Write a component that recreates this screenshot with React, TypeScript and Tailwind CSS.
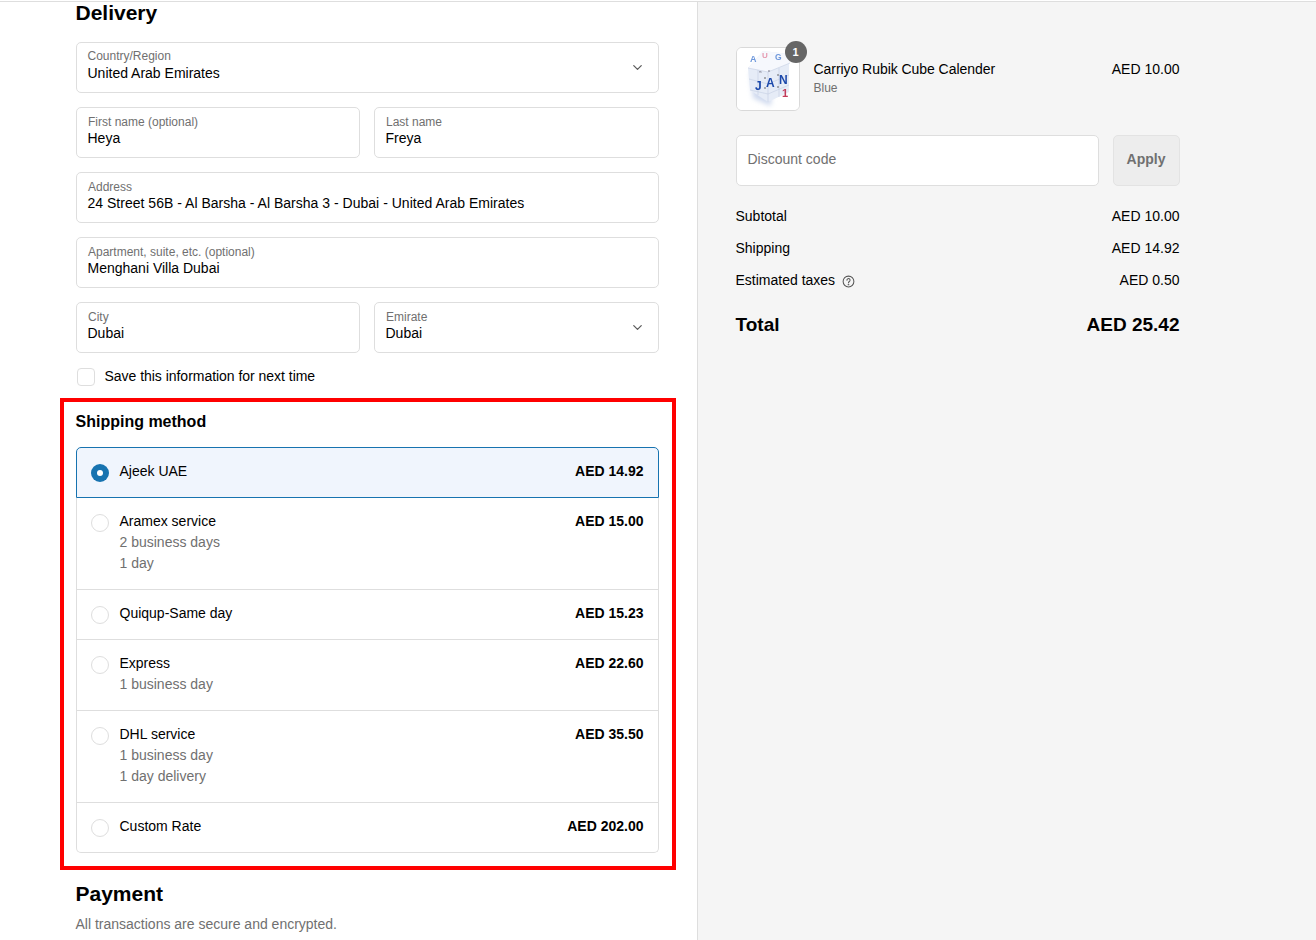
import React from "react";
import { ChevronDown } from "lucide-react";

function Field({ label, value, chevron, className = "", first, valueClass = "" }: { label: string; value: string; chevron?: boolean; className?: string; first?: boolean; valueClass?: string }) {
  return (
    <div className={`relative h-[51px] rounded-[5px] border border-[#dedede] bg-white pl-[11px] ${first ? "pt-[6px]" : "pt-[7px]"} ${className}`}>
      <div className={`${first ? "" : "pl-[0.5px]"} text-[12px] leading-[14px] text-[#707070]`}>{label}</div>
      <div className={`${first ? "mt-[1px]" : ""} text-[14px] leading-[18px] text-[#000] ${valueClass}`}>{value}</div>
      {chevron && <ChevronDown className="absolute right-[13px] top-[17px] text-[#5c5c5c]" size={15} strokeWidth={2} />}
    </div>
  );
}

const options = [
  { name: "Ajeek UAE", price: "AED 14.92", sub: [], h: "h-[51px]", selected: true },
  { name: "Aramex service", price: "AED 15.00", sub: ["2 business days", "1 day"], h: "h-[92px]" },
  { name: "Quiqup-Same day", price: "AED 15.23", sub: [], h: "h-[50px]" },
  { name: "Express", price: "AED 22.60", sub: ["1 business day"], h: "h-[71px]" },
  { name: "DHL service", price: "AED 35.50", sub: ["1 business day", "1 day delivery"], h: "h-[92px]" },
  { name: "Custom Rate", price: "AED 202.00", sub: [], h: "h-[50px]" },
];

function Option({ o, i }: { o: (typeof options)[number]; i: number }) {
  const last = i === options.length - 1;
  return (
    <div
      className={`${o.h} flex items-start pl-[14px] pr-[14px] pt-[13px] ${
        o.selected
          ? "rounded-t-[5px] border border-[#1773b0] bg-[#f0f5fd]"
          : `border-x border-b border-[#dedede] bg-white ${last ? "rounded-b-[5px]" : ""}`
      }`}
    >
      <div
        className={`mt-[3px] flex h-[18px] w-[18px] shrink-0 items-center justify-center rounded-full ${
          o.selected ? "bg-[#1773b0]" : "border border-[#dedede] bg-white"
        }`}
      >
        {o.selected && <div className="h-[6px] w-[6px] rounded-full bg-white" />}
      </div>
      <div className="ml-[11px] flex-1 text-[14px] leading-[21px]">
        <div className="text-[#000]">{o.name}</div>
        {o.sub.map((s) => (
          <div key={s} className="text-[#707070]">{s}</div>
        ))}
      </div>
      <div className="text-[14px] font-bold leading-[21px] text-[#000]">{o.price}</div>
    </div>
  );
}

function Cube() {
  const f = "Liberation Sans";
  return (
    <svg viewBox="0 0 62 62" className="h-full w-full rounded-[5px]">
      <defs>
        <filter id="soft" x="-20%" y="-20%" width="140%" height="140%">
          <feGaussianBlur stdDeviation="0.35" />
        </filter>
        <filter id="shadow" x="-30%" y="-30%" width="160%" height="160%">
          <feGaussianBlur stdDeviation="2.5" />
        </filter>
      </defs>
      <rect width="62" height="62" fill="#fff" />
      <path d="M13 24 L36 28 L34 58 L16 50 Z" fill="#cfd9ee" filter="url(#shadow)" />
      <g filter="url(#soft)">
        <path d="M11 20 L26 3 L52 6 L52 44 L31 54 L13 42 Z" fill="#e6ecf7" />
        <path d="M11 20 L26 3 L52 6 L53 15 L31 24 Z" fill="#f6f8fd" />
        <path d="M11 20 L31 24 L53 15 M31 24 L31 54 M12 31 L31 36 L52 27 M13 42 L31 46 L52 37 M21 22 L21 47 M42 20 L42 49" stroke="#c5cfe2" strokeWidth="0.6" fill="none" />
        <text x="13" y="14" fontSize="9" fill="#6d97db" fontWeight="700" fontFamily={f}>A</text>
        <text x="25" y="10" fontSize="8" fill="#e69ab0" fontWeight="700" fontFamily={f}>U</text>
        <text x="38" y="12" fontSize="8.5" fill="#6d97db" fontWeight="700" fontFamily={f}>G</text>
        <text x="18" y="42" fontSize="12" fill="#1c48ab" fontWeight="700" fontFamily={f}>J</text>
        <text x="29" y="39" fontSize="12" fill="#1c48ab" fontWeight="700" fontFamily={f}>A</text>
        <text x="42" y="36" fontSize="12" fill="#1c48ab" fontWeight="700" fontFamily={f}>N</text>
        <text x="45" y="49" fontSize="11" fill="#c23a5a" fontWeight="700" fontFamily={f}>1</text>
        <text x="22" y="25" fontSize="3" fill="#667" fontFamily={f}>m</text>
        <text x="31" y="24" fontSize="3" fill="#667" fontFamily={f}>w</text>
      </g>
      <circle cx="28" cy="30" r="0.8" fill="#555" />
      <circle cx="41" cy="27" r="0.8" fill="#555" />
      <circle cx="28" cy="40" r="0.8" fill="#555" />
      <circle cx="41" cy="39" r="0.8" fill="#555" />
    </svg>
  );
}

function Row({ label, value, help }: { label: string; value: string; help?: boolean }) {
  return (
    <div className="flex h-[32px] items-center justify-between text-[14px] text-[#000]">
      <div className="flex items-center">
        {label}
        {help && (
          <svg viewBox="0 0 14 14" className="ml-[7px] mt-[2px] h-[13px] w-[13px]" fill="none" stroke="#555" strokeWidth="1.1" strokeLinecap="round">
            <circle cx="7" cy="7" r="5.8" />
            <path d="M5.3 5.6a1.7 1.7 0 1 1 2.6 1.4c-.6.4-.9.7-.9 1.3" />
            <circle cx="7" cy="10.2" r="0.35" />
          </svg>
        )}
      </div>
      <div>{value}</div>
    </div>
  );
}

export default function App() {
  return (
    <div className="h-[940px] w-[1316px] overflow-hidden bg-white pt-[1px] font-['Liberation_Sans',Arial,sans-serif]">
      <div className="flex h-[939px] border-t border-[#dedede]">
        <div className="w-[698px] shrink-0 border-r border-[#dedede] bg-white">
          <div className="pl-[75.5px] pr-[38px]">
            <h2 className="-mt-[1px] h-[41px] text-[21px] font-bold leading-[24px] text-[#000]">Delivery</h2>
            <div className="flex w-[583px] flex-col gap-[14px]">
              <Field first label="Country/Region" value="United Arab Emirates" chevron />
              <div className="flex gap-[14px]">
                <Field className="w-[284px]" label="First name (optional)" value="Heya" />
                <Field className="flex-1" label="Last name" value="Freya" />
              </div>
              <Field label="Address" value="24 Street 56B - Al Barsha - Al Barsha 3 - Dubai - United Arab Emirates" valueClass="tracking-[0.015px]" />
              <Field label="Apartment, suite, etc. (optional)" value="Menghani Villa Dubai" />
              <div className="flex gap-[14px]">
                <Field className="w-[284px]" label="City" value="Dubai" />
                <Field className="flex-1" label="Emirate" value="Dubai" chevron />
              </div>
            </div>
            <div className="mt-[14px] flex h-[20px] items-center pl-[1px]">
              <div className="h-[18px] w-[18px] rounded-[4px] border border-[#dedede] bg-white" />
              <span className="mb-[2px] ml-[10px] text-[14px] tracking-[-0.03px] text-[#000]">Save this information for next time</span>
            </div>
          </div>
          <div className="ml-[60px] mt-[11px] h-[472px] w-[616px] border-4 border-[#ff0000] pl-[11.5px] pr-[13.5px] pt-[9px]">
            <h3 className="h-[36px] text-[16px] font-bold leading-[21px] text-[#000]">Shipping method</h3>
            <div>
              {options.map((o, i) => (
                <Option key={o.name} o={o} i={i} />
              ))}
            </div>
          </div>
          <div className="pl-[75.5px] pt-[11px]">
            <h2 className="h-[29px] text-[21px] font-bold leading-[25px] text-[#000]">Payment</h2>
            <p className="mt-[5px] text-[14px] leading-[18px] text-[#707070]">All transactions are secure and encrypted.</p>
          </div>
        </div>
        <div className="flex-1 bg-[#f5f5f5] pl-[37.5px] pt-[45px]">
          <div className="w-[444px]">
            <div className="flex h-[64px] items-start">
              <div className="relative h-[64px] w-[64px] shrink-0 rounded-[6px] border border-[#d9d9d9] bg-white">
                <Cube />
                <div className="absolute -right-[8px] -top-[7px] flex h-[22px] w-[22px] items-center justify-center rounded-full bg-[#666666] text-[11px] font-bold text-white">1</div>
              </div>
              <div className="ml-[14px] flex-1 pt-[12px]">
                <div className="text-[14px] leading-[21px] tracking-[-0.05px] text-[#000]">Carriyo Rubik Cube Calender</div>
                <div className="text-[12px] leading-[16px] text-[#707070]">Blue</div>
              </div>
              <div className="pt-[12px] text-[14px] leading-[21px] text-[#000]">AED 10.00</div>
            </div>
            <div className="mt-[24px] flex gap-[14px]">
              <div className="flex h-[51px] flex-1 items-center rounded-[5px] border border-[#dedede] bg-white pb-[2px] pl-[11px] text-[14px] text-[#707070]">Discount code</div>
              <div className="flex h-[51px] w-[67px] items-center justify-center rounded-[5px] border border-[#e3e3e3] bg-[#ededed] pb-[2px] text-[14px] font-bold text-[#707070]">Apply</div>
            </div>
            <div className="mt-[14px]">
              <Row label="Subtotal" value="AED 10.00" />
              <Row label="Shipping" value="AED 14.92" />
              <Row label="Estimated taxes" value="AED 0.50" help />
            </div>
            <div className="mt-[13px] flex h-[32px] items-center justify-between text-[19px] font-bold text-[#000]">
              <span>Total</span>
              <span>AED 25.42</span>
            </div>
          </div>
        </div>
      </div>
    </div>
  );
}
